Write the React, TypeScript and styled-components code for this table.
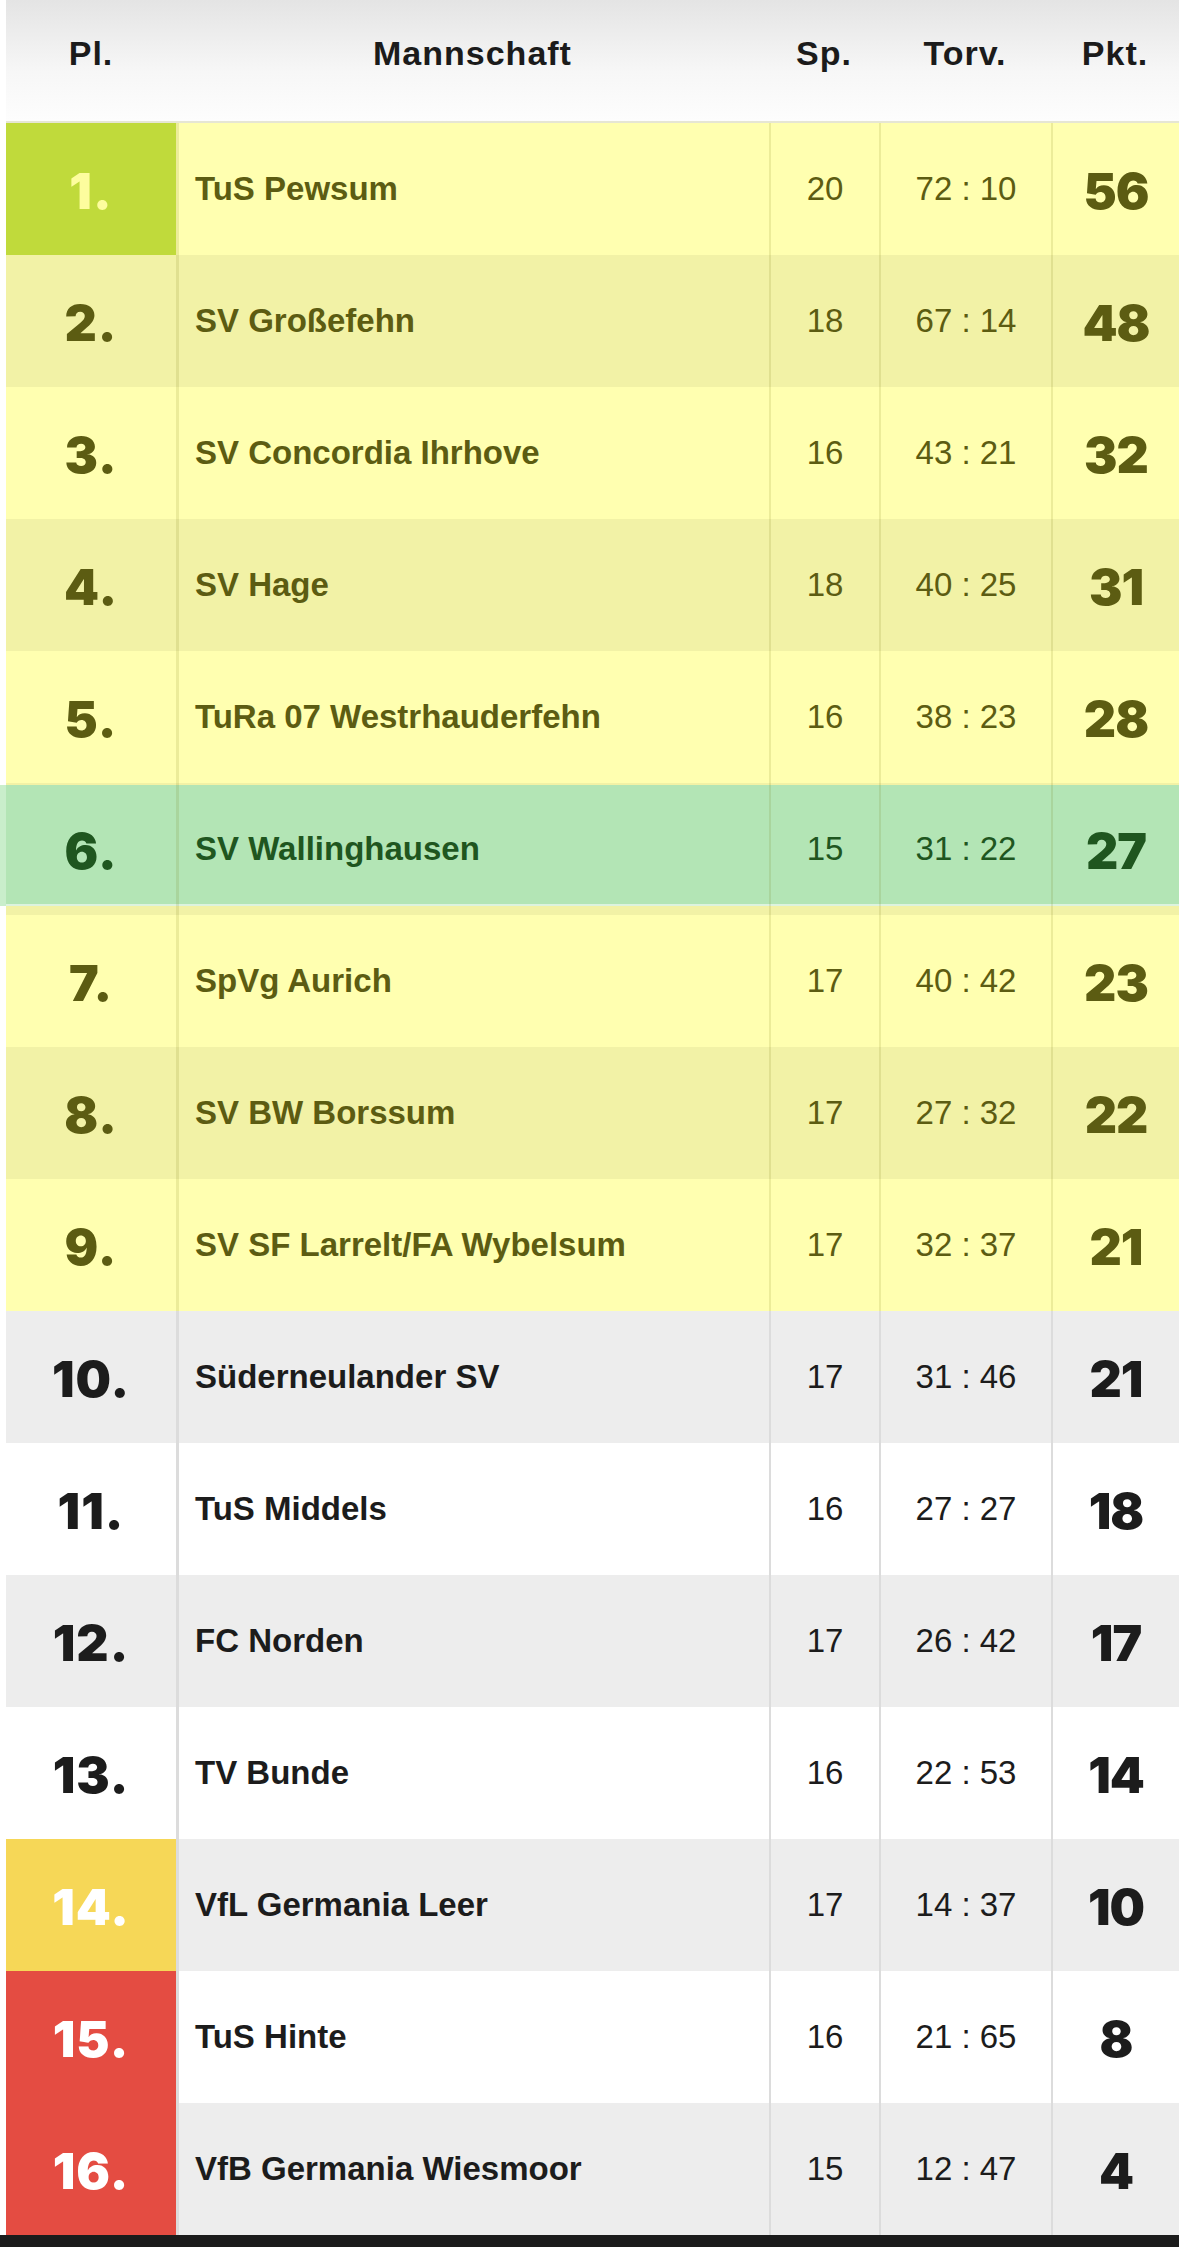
import styled, { createGlobalStyle, css } from "styled-components";

const GlobalStyle = createGlobalStyle`
  body {
    margin: 0;
    background: #ffffff;
    font-family: "Liberation Sans", Arial, sans-serif;
  }
`;

type Tone = "promo" | "hot" | "plain";

interface Team {
  rank: number;
  name: string;
  games: number;
  goals: string;
  points: number;
}

const teams: Team[] = [
  { rank: 1, name: "TuS Pewsum", games: 20, goals: "72 : 10", points: 56 },
  { rank: 2, name: "SV Großefehn", games: 18, goals: "67 : 14", points: 48 },
  { rank: 3, name: "SV Concordia Ihrhove", games: 16, goals: "43 : 21", points: 32 },
  { rank: 4, name: "SV Hage", games: 18, goals: "40 : 25", points: 31 },
  { rank: 5, name: "TuRa 07 Westrhauderfehn", games: 16, goals: "38 : 23", points: 28 },
  { rank: 6, name: "SV Wallinghausen", games: 15, goals: "31 : 22", points: 27 },
  { rank: 7, name: "SpVg Aurich", games: 17, goals: "40 : 42", points: 23 },
  { rank: 8, name: "SV BW Borssum", games: 17, goals: "27 : 32", points: 22 },
  { rank: 9, name: "SV SF Larrelt/FA Wybelsum", games: 17, goals: "32 : 37", points: 21 },
  { rank: 10, name: "Süderneulander SV", games: 17, goals: "31 : 46", points: 21 },
  { rank: 11, name: "TuS Middels", games: 16, goals: "27 : 27", points: 18 },
  { rank: 12, name: "FC Norden", games: 17, goals: "26 : 42", points: 17 },
  { rank: 13, name: "TV Bunde", games: 16, goals: "22 : 53", points: 14 },
  { rank: 14, name: "VfL Germania Leer", games: 17, goals: "14 : 37", points: 10 },
  { rank: 15, name: "TuS Hinte", games: 16, goals: "21 : 65", points: 8 },
  { rank: 16, name: "VfB Germania Wiesmoor", games: 15, goals: "12 : 47", points: 4 },
];

const HIGHLIGHT = 6;

const columns = "170px 1fr 110px 172px 128px";

const rowBg = (tone: Tone, even: boolean) => {
  if (tone === "promo") return even ? "#f2f2a6" : "#ffffb0";
  return even ? "#ededed" : "#ffffff";
};

const rowInk = (tone: Tone) =>
  tone === "promo" ? "#5c5c12" : tone === "hot" ? "#1f561f" : "#1c1c1c";

const Page = styled.div`
  padding-left: 6px;
`;

const Table = styled.div`
  display: flex;
  flex-direction: column;
`;

const Head = styled.div`
  display: grid;
  grid-template-columns: ${columns};
  height: 123px;
  padding-bottom: 14px;
  box-sizing: border-box;
  align-items: center;
  background: linear-gradient(#e4e4e4, #f7f7f7 60%, #fdfdfd);
  border-bottom: 2px solid #e6e6d4;
`;

const HeadCell = styled.div`
  text-align: center;
  font-size: 34px;
  font-weight: 700;
  letter-spacing: 1px;
  color: #1b1b1b;
`;

const Row = styled.div<{ $tone: Tone; $even: boolean }>`
  position: relative;
  display: grid;
  grid-template-columns: ${columns};
  height: 132px;
  background: ${(p) => rowBg(p.$tone === "hot" ? "promo" : p.$tone, p.$even)};
  color: ${(p) => rowInk(p.$tone)};
  ${(p) =>
    p.$tone === "hot" &&
    css`
      &::before {
        content: "";
        position: absolute;
        left: 0;
        right: 0;
        top: 2px;
        bottom: 9px;
        background: #b3e5b5;
        border-bottom: 2px solid rgba(255, 255, 255, 0.55);
        box-shadow: -6px 0 0 #c9eecb;
      }
    `}
`;

const Cell = styled.div<{ $line?: number; $tone: Tone }>`
  position: relative;
  display: flex;
  align-items: center;
  justify-content: center;
  border-left: ${(p) => p.$line ?? 2}px solid
    ${(p) => (p.$tone === "plain" ? "#dcdcdc" : "rgba(110, 110, 0, 0.13)")};
`;

const RankCell = styled.div<{ $bg?: string; $ink?: string }>`
  position: relative;
  display: flex;
  align-items: center;
  justify-content: center;
  padding-top: 3px;
  background: ${(p) => p.$bg ?? "transparent"};
  color: ${(p) => p.$ink ?? "inherit"};
  font-family: Inter, "DejaVu Sans", sans-serif;
  font-size: 50px;
  font-weight: 900;
  letter-spacing: 1px;
`;

const NameCell = styled(Cell)`
  justify-content: flex-start;
  padding-left: 16px;
  font-size: 33px;
  font-weight: 700;
`;

const NumCell = styled(Cell)`
  font-size: 33px;
  font-weight: 400;
`;

const PointsCell = styled(Cell)`
  padding-top: 3px;
  font-family: Inter, "DejaVu Sans", sans-serif;
  font-size: 50px;
  font-weight: 900;
  letter-spacing: -1px;
`;

const Footer = styled.div`
  height: 40px;
  margin-left: -6px;
  background: #1b1b1b;
`;

const rankBadge = (rank: number) => {
  if (rank === 1) return { bg: "#c0da3b", ink: "#fdfd9e" };
  if (rank === 14) return { bg: "#f6d757", ink: "#ffffff" };
  if (rank >= 15) return { bg: "#e44c42", ink: "#ffffff" };
  return {};
};

function App() {
  return (
    <Page>
      <GlobalStyle />
      <Table>
        <Head>
          <HeadCell>Pl.</HeadCell>
          <HeadCell>Mannschaft</HeadCell>
          <HeadCell>Sp.</HeadCell>
          <HeadCell>Torv.</HeadCell>
          <HeadCell>Pkt.</HeadCell>
        </Head>
        {teams.map((t) => {
          const tone: Tone =
            t.rank === HIGHLIGHT ? "hot" : t.rank <= 9 ? "promo" : "plain";
          const badge = rankBadge(t.rank);
          return (
            <Row key={t.rank} $tone={tone} $even={t.rank % 2 === 0}>
              <RankCell $bg={badge.bg} $ink={badge.ink}>
                {t.rank}.
              </RankCell>
              <NameCell $tone={tone} $line={3}>
                {t.name}
              </NameCell>
              <NumCell $tone={tone}>{t.games}</NumCell>
              <NumCell $tone={tone}>{t.goals}</NumCell>
              <PointsCell $tone={tone}>{t.points}</PointsCell>
            </Row>
          );
        })}
        <Footer />
      </Table>
    </Page>
  );
}

export default App;
